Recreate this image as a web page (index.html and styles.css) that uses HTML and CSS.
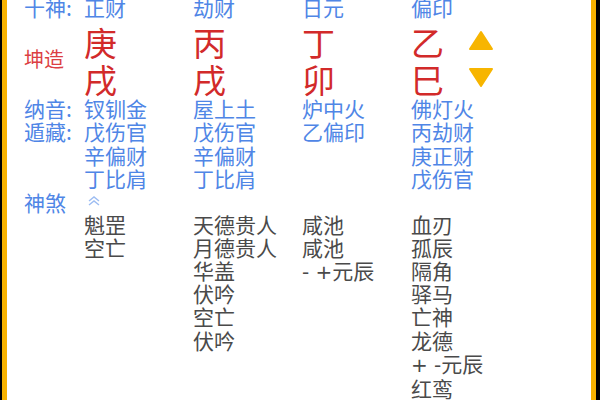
FILE: index.html
```html
<!DOCTYPE html>
<html lang="zh">
<head>
<meta charset="utf-8">
<link rel="stylesheet" href="styles.css">
</head>
<body>
<div class="frame">
  <div class="screen">
    <div class="row r-top blue">
      <div class="lbl">十神:</div>
      <div>正财</div><div>劫财</div><div>日元</div><div>偏印</div>
    </div>
    <div class="row r-pillars">
      <div class="lbl red-l">坤造</div>
      <div class="big">庚<br>戌</div>
      <div class="big">丙<br>戌</div>
      <div class="big">丁<br>卯</div>
      <div class="big">乙<br>巳</div>
      <div class="arrows">
        <svg width="26" height="21" viewBox="0 0 26 21"><polygon points="13,2 24,19 2,19" fill="#f7b500" stroke="#f7b500" stroke-width="2" stroke-linejoin="round"/></svg>
        <svg width="26" height="21" viewBox="0 0 26 21"><polygon points="2,2 24,2 13,19" fill="#f7b500" stroke="#f7b500" stroke-width="2" stroke-linejoin="round"/></svg>
      </div>
    </div>
    <div class="row blue">
      <div class="lbl">纳音:</div>
      <div>钗钏金</div><div>屋上土</div><div>炉中火</div><div>佛灯火</div>
    </div>
    <div class="row blue">
      <div class="lbl">遁藏:</div>
      <div>戊伤官<br>辛偏财<br>丁比肩</div>
      <div>戊伤官<br>辛偏财<br>丁比肩</div>
      <div>乙偏印</div>
      <div>丙劫财<br>庚正财<br>戊伤官</div>
    </div>
    <div class="row blue r-ss">
      <div class="lbl">神煞</div>
      <div class="chev"><svg width="14" height="12" viewBox="0 0 14 12"><polyline points="2,6 7,2 12,6" fill="none" stroke="#9dbdf2" stroke-width="1.4"/><polyline points="2,10 7,6 12,10" fill="none" stroke="#9dbdf2" stroke-width="1.4"/></svg></div>
    </div>
    <div class="row gray r-list">
      <div class="lbl"></div>
      <div>魁罡<br>空亡</div>
      <div>天德贵人<br>月德贵人<br>华盖<br>伏吟<br>空亡<br>伏吟</div>
      <div>咸池<br>咸池<br><span class="sym">- +</span>元辰</div>
      <div>血刃<br>孤辰<br>隔角<br>驿马<br>亡神<br>龙德<br><span class="sym">+ -</span>元辰<br>红鸾</div>
    </div>
  </div>
</div>
</body>
</html>
```
FILE: styles.css
```css
html, body {
  margin: 0;
  padding: 0;
  background: #000;
}
.frame {
  width: 600px;
  height: 400px;
  box-sizing: border-box;
  padding: 0 4px 0 2px;
  background: #000;
  overflow: hidden;
}
.screen {
  height: 400px;
  box-sizing: border-box;
  background: #fff;
  border-left: 5px solid #f7b200;
  border-right: 5px solid #f7b200;
  padding-left: 17px;
  overflow: hidden;
  font-family: "Noto Sans CJK SC", "Noto Sans", sans-serif;
  font-size: 21px;
  line-height: 23.5px;
}
.row {
  display: grid;
  grid-template-columns: 60px 109px 109px 109px 109px;
}
.blue { color: #4f86e6; }
.gray { color: #4a4a4a; }
.red-l { color: #dc3f43; }
.r-top {
  margin-top: -4px;
}
.r-pillars {
  grid-template-columns: 60px 109px 109px 109px 57px auto;
  margin-top: 4px;
  margin-bottom: -1px;
}
.r-pillars .lbl {
  align-self: center;
  font-size: 20px;
  margin-top: -4px;
}
.big {
  color: #d22a2a;
  font-size: 33px;
  line-height: 37px;
}
.arrows {
  display: flex;
  flex-direction: column;
  gap: 16px;
  padding-top: 6px;
}
.arrows svg { display: block; }
.r-ss { height: 22px; }
.chev {
  padding-top: 4px;
  padding-left: 3px;
}
.chev svg { display: block; }
.r-list {
  line-height: 23.2px;
}
.sym {
  font-family: "DejaVu Sans", sans-serif;
  font-size: 20px;
}
```
